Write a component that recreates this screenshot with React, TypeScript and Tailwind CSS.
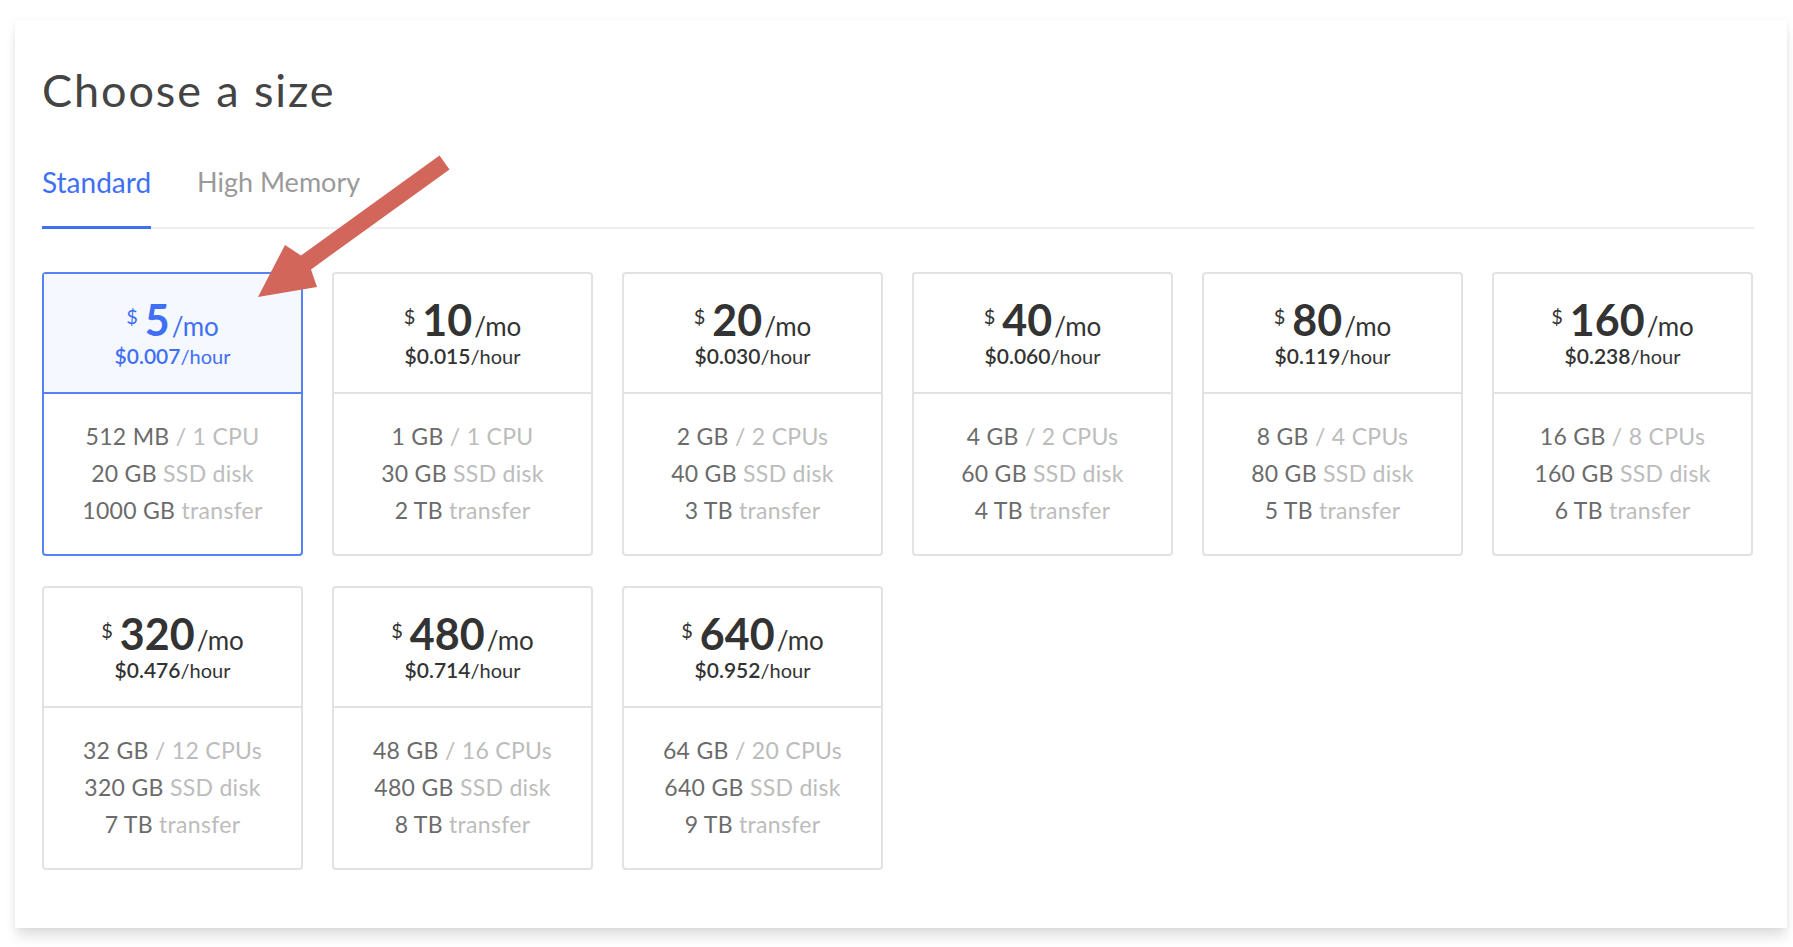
import React from 'react';

interface Plan {
  mo: number;
  hour: string;
  mem: string;
  cpu: string;
  disk: string;
  transfer: string;
}

const plans: Plan[] = [
  { mo: 5, hour: '0.007', mem: '512 MB', cpu: '1 CPU', disk: '20 GB', transfer: '1000 GB' },
  { mo: 10, hour: '0.015', mem: '1 GB', cpu: '1 CPU', disk: '30 GB', transfer: '2 TB' },
  { mo: 20, hour: '0.030', mem: '2 GB', cpu: '2 CPUs', disk: '40 GB', transfer: '3 TB' },
  { mo: 40, hour: '0.060', mem: '4 GB', cpu: '2 CPUs', disk: '60 GB', transfer: '4 TB' },
  { mo: 80, hour: '0.119', mem: '8 GB', cpu: '4 CPUs', disk: '80 GB', transfer: '5 TB' },
  { mo: 160, hour: '0.238', mem: '16 GB', cpu: '8 CPUs', disk: '160 GB', transfer: '6 TB' },
  { mo: 320, hour: '0.476', mem: '32 GB', cpu: '12 CPUs', disk: '320 GB', transfer: '7 TB' },
  { mo: 480, hour: '0.714', mem: '48 GB', cpu: '16 CPUs', disk: '480 GB', transfer: '8 TB' },
  { mo: 640, hour: '0.952', mem: '64 GB', cpu: '20 CPUs', disk: '640 GB', transfer: '9 TB' },
];

const SizeCard: React.FC<{ plan: Plan; selected?: boolean }> = ({ plan, selected }) => {
  return (
    <div
      className={`flex flex-col h-[284px] rounded-[4px] border-2 ${
        selected ? 'border-[#5583f6]' : 'border-[#e2e2e2]'
      }`}
    >
      {/* Price header */}
      <div
        className={`h-[120px] shrink-0 flex flex-col items-center pt-[18px] border-b-2 ${
          selected ? 'bg-[#f5f8ff] border-[#5583f6] text-[#3f6ff5]' : 'border-[#e2e2e2] text-[#333333]'
        }`}
      >
        <div className="h-[48px] leading-[48px] whitespace-nowrap">
          <span className="text-[20px] align-[12px] mr-[7px]">$</span>
          <span className="text-[43px] font-bold">{plan.mo}</span>
          <span className="text-[26px] ml-[2px]">/mo</span>
        </div>
        <div className="h-[30px] leading-[30px] mt-[1px] whitespace-nowrap">
          <span className="text-[21px] font-semibold">${plan.hour}</span>
          <span className="text-[20px]">/hour</span>
        </div>
      </div>

      {/* Specs */}
      <div className="flex flex-col items-center pt-[24px] text-[23px] tracking-[0.3px] leading-[37px] text-[#6b6b6b]">
        <div>
          {plan.mem} <span className="text-[#bcbcbc]">/ {plan.cpu}</span>
        </div>
        <div>
          {plan.disk} <span className="text-[#bcbcbc]">SSD disk</span>
        </div>
        <div>
          {plan.transfer} <span className="text-[#bcbcbc]">transfer</span>
        </div>
      </div>
    </div>
  );
};

const App: React.FC = () => {
  return (
    <div className="relative w-[1793px] h-[947px] bg-white pt-[20px] pl-[15px] font-['Lato',_sans-serif]">
      <div className="w-[1772px] h-[908px] bg-white pl-[27px] pr-[34px] pt-[43px] shadow-[0_10px_12px_-2px_rgba(0,0,0,0.13),0_0_6px_rgba(0,0,0,0.05)]">
        <h1 className="text-[45px] leading-[54px] tracking-[1.9px] text-[#444444] font-normal">Choose a size</h1>

        {/* Tabs */}
        <div className="mt-[48px] flex gap-[46px] border-b-2 border-[#efefef] mr-[-2px]">
          <div className="text-[28px] leading-[34px] pb-[27px] mb-[-2px] border-b-[3px] border-[#3f6ff5] text-[#3f6ff5]">
            Standard
          </div>
          <div className="text-[27px] leading-[34px] pb-[27px] text-[#9a9a9a]">High Memory</div>
        </div>

        {/* Cards */}
        <div className="mt-[43px] grid grid-cols-6 gap-x-[29px] gap-y-[30px]">
          {plans.map((p, i) => (
            <SizeCard key={p.mo} plan={p} selected={i === 0} />
          ))}
        </div>
      </div>

      {/* Annotation arrow */}
      <svg
        className="absolute left-[250px] top-[150px] w-[210px] h-[160px] pointer-events-none"
        viewBox="250 150 210 160"
      >
        <polygon
          points="258,297 285,245 301,255.6 439.5,155.6 449.5,169.4 311,269.4 317,287"
          fill="#d3665b"
        />
      </svg>
    </div>
  );
};

export default App;
